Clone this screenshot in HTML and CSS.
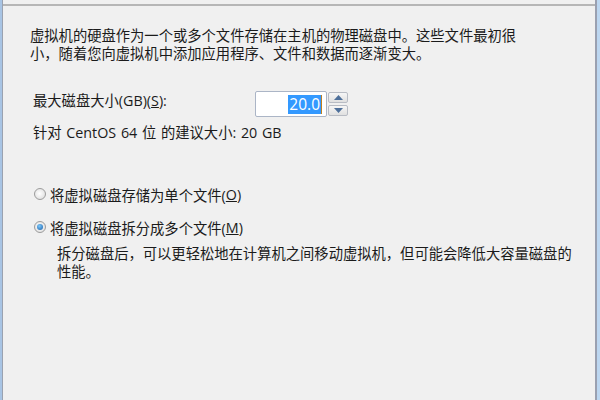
FILE: index.html
```html
<!DOCTYPE html>
<html lang="zh-CN">
<head>
<meta charset="utf-8">
<link rel="stylesheet" href="styles.css">
</head>
<body>
<div class="win">
  <div class="pane">
    <div class="topline"></div>
    <div class="content">
      <p class="intro">虚拟机的硬盘作为一个或多个文件存储在主机的物理磁盘中。这些文件最初很<br>小，随着您向虚拟机中添加应用程序、文件和数据而逐渐变大。</p>
      <div class="sizerow">
        <span class="label">最大磁盘大小(GB)(<u>S</u>):</span>
        <div class="spin">
          <div class="field"><span class="sel">20.0</span><span class="caret"></span></div>
          <div class="arrows">
            <div class="arr"><svg width="9" height="5" viewBox="0 0 9 5"><path d="M0 5 L4.5 0 L9 5 Z" fill="#4d6f9a"/></svg></div>
            <div class="arr"><svg width="9" height="5" viewBox="0 0 9 5"><path d="M0 0 L4.5 5 L9 0 Z" fill="#4d6f9a"/></svg></div>
          </div>
        </div>
      </div>
      <p class="hint">针对 CentOS 64 位 的建议大小: 20 GB</p>
      <div class="options">
        <label class="radio"><span class="dot"></span>将虚拟磁盘存储为单个文件(<u>O</u>)</label>
        <label class="radio"><span class="dot on"></span>将虚拟磁盘拆分成多个文件(<u>M</u>)</label>
        <p class="desc">拆分磁盘后，可以更轻松地在计算机之间移动虚拟机，但可能会降低大容量磁盘的<br>性能。</p>
      </div>
    </div>
  </div>
</div>
</body>
</html>
```
FILE: styles.css
```css
html, body {
  margin: 0;
  padding: 0;
  width: 600px;
  height: 400px;
  overflow: hidden;
  background: #f0f0f0;
  font-family: "Open Sans", "Noto Sans CJK SC", sans-serif;
  font-size: 14.3px;
  color: #1b1b1b;
}
.win {
  height: 400px;
  box-sizing: border-box;
  border-left: 2px solid #a8c4e4;
  border-right: 3px solid #bcd6f0;
}
.pane {
  height: 100%;
  box-sizing: border-box;
  border-left: 1px solid #9aa2b0;
  border-right: 2px solid #9aa0b0;
  padding-top: 4px;
}
.topline {
  height: 2px;
  background: #b6b6b6;
}
.content {
  padding-left: 27px;
}
.intro {
  margin: 21px 0 0 0;
  line-height: 18px;
}
.sizerow {
  display: flex;
  align-items: center;
  margin-top: 28px;
  margin-left: 3px;
}
.label {
  width: 222px;
  line-height: 18px;
  margin-bottom: 6px;
}
.spin {
  display: flex;
  align-items: center;
  gap: 1px;
}
.field {
  width: 72px;
  height: 26px;
  box-sizing: border-box;
  border: 1px solid #abb5c6;
  border-radius: 2px;
  background: #fff;
  display: flex;
  align-items: center;
  justify-content: flex-end;
  padding-right: 4px;
  font-family: "Open Sans", sans-serif;
  font-size: 15.5px;
}
.sel {
  background: #3399ff;
  color: #fff;
  line-height: 19px;
  padding: 0 1px;
}
.caret {
  width: 1px;
  height: 19px;
  background: #c08020;
}
.arrows {
  display: flex;
  flex-direction: column;
  gap: 2px;
}
.arr {
  width: 20px;
  height: 11px;
  box-sizing: border-box;
  border: 1px solid #b8bcc4;
  border-radius: 2px;
  background: linear-gradient(#f6f6f6, #e0e0e0);
  display: flex;
  align-items: center;
  justify-content: center;
}
.hint {
  margin: 7px 0 0 3px;
  line-height: 18px;
  word-spacing: 1px;
}
.options {
  margin-top: 43px;
  margin-left: 4px;
  display: flex;
  flex-direction: column;
}
.radio {
  display: flex;
  align-items: center;
  height: 18px;
  margin-bottom: 15px;
}
.dot {
  width: 12px;
  height: 12px;
  box-sizing: border-box;
  border-radius: 50%;
  border: 1px solid #9c9c9c;
  background: radial-gradient(circle at 45% 45%, #ffffff, #d8d8d8);
  margin-right: 4px;
  position: relative;
}
.dot.on::after {
  content: "";
  position: absolute;
  left: 2px;
  top: 2px;
  width: 6px;
  height: 6px;
  border-radius: 50%;
  background: radial-gradient(circle at 40% 35%, #7cc8fa, #1a5ea8);
}
.desc {
  margin: -6px 0 0 23px;
  line-height: 18px;
}
u { text-decoration: underline; }
```
